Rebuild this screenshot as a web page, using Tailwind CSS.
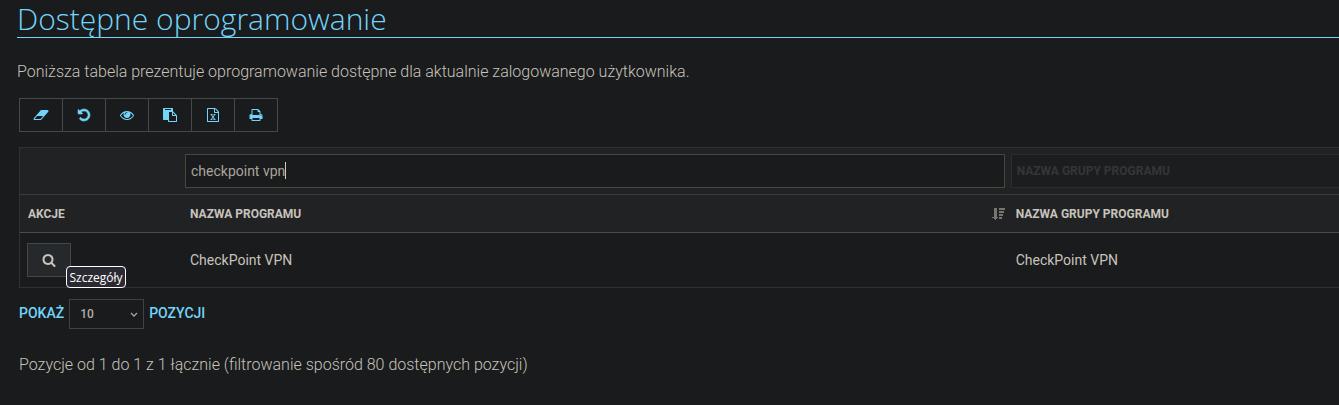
<!DOCTYPE html>
<html lang="pl">
<head>
    <meta charset="UTF-8">
    <meta name="viewport" content="width=device-width, initial-scale=1.0">
    <title>Dostępne oprogramowanie</title>
    <script src="https://cdn.jsdelivr.net/npm/@tailwindcss/browser@4"></script>
</head>
<body class="bg-[#1a1b1d] min-h-screen overflow-x-hidden font-['Roboto',sans-serif] text-sm text-[#c8c3bc]">
    <main class="pl-[17px]">
        <h1 class="h-[38px] border-b border-[#72d5fa] font-['Open_Sans',sans-serif] font-light text-[30px] leading-[37px] text-[#72d5fa]">Dostępne oprogramowanie</h1>
        <p class="mt-[22px] text-base font-light">Poniższa tabela prezentuje oprogramowanie dostępne dla aktualnie zalogowanego użytkownika.</p>

        <div class="pl-0.5">
            <!-- Toolbar -->
            <div class="mt-3.5 inline-flex border border-[#46484a] divide-x divide-[#46484a] text-[#72d5fa] align-top">
                <button type="button" aria-label="Wyczyść" class="flex h-8 w-[43px] items-center justify-center">
                    <svg class="h-3.5 w-4" viewBox="0 0 2048 1792" fill="currentColor"><path d="M960 1408l336-384h-768l-336 384h768zm1013-1077q15 34 9.5 71.5t-30.5 65.5l-896 1024q-38 44-96 44h-768q-38 0-69.5-20.5t-47.5-54.5q-15-34-9.5-71.5t30.5-65.5l896-1024q38-44 96-44h768q38 0 69.5 20.5t47.5 54.5z"/></svg>
                </button>
                <button type="button" aria-label="Przywróć" class="flex h-8 w-[43px] items-center justify-center">
                    <svg class="size-3.5" viewBox="0 0 1792 1792" fill="currentColor" stroke="currentColor" stroke-width="70"><path d="M1664 896q0 156-61 298t-164 245-245 164-298 61q-172 0-327-72.5t-264-204.5q-7-10-6.5-22.5t8.5-20.5l137-138q10-9 25-9 16 2 23 12 73 95 179 147t225 52q104 0 198.5-40.5t163.5-109.5 109.5-163.5 40.5-198.5-40.5-198.5-109.5-163.5-163.5-109.5-198.5-40.5q-98 0-188 35.5t-160 101.5l137 138q31 30 14 69-17 40-59 40h-448q-26 0-45-19t-19-45v-448q0-42 40-59 39-17 69 14l130 129q107-101 244.5-156.5t284.5-55.5q156 0 298 61t245 164 164 245 61 298z"/></svg>
                </button>
                <button type="button" aria-label="Widoczność kolumn" class="flex h-8 w-[43px] items-center justify-center">
                    <svg class="size-3.5" viewBox="0 0 1792 1792" fill="currentColor"><path d="M1664 960q-152-236-381-353 61 104 61 225 0 185-131.5 316.5t-316.5 131.5-316.5-131.5-131.5-316.5q0-121 61-225-229 117-381 353 133 205 333.5 326.5t434.5 121.5 434.5-121.5 333.5-326.5zm-720-384q0-20-14-34t-34-14q-125 0-214.5 89.5t-89.5 214.5q0 20 14 34t34 14 34-14 14-34q0-86 61-147t147-61q20 0 34-14t14-34zm848 384q0 34-20 69-140 230-376.5 368.5t-499.5 138.5-499.5-139-376.5-368q-20-35-20-69t20-69q140-229 376.5-368t499.5-139 499.5 139 376.5 368q20 35 20 69z"/></svg>
                </button>
                <button type="button" aria-label="Kopiuj" class="flex h-8 w-[43px] items-center justify-center">
                    <svg class="size-3.5" viewBox="0 0 1792 1792" fill="currentColor"><path d="M768 1664h896v-640h-416q-40 0-68-28t-28-68v-416h-384v1152zm256-1440v-64q0-13-9.5-22.5t-22.5-9.5h-704q-13 0-22.5 9.5t-9.5 22.5v64q0 13 9.5 22.5t22.5 9.5h704q13 0 22.5-9.5t9.5-22.5zm256 672h299l-299-299v299zm512 128v672q0 40-28 68t-68 28h-960q-40 0-68-28t-28-68v-160h-544q-40 0-68-28t-28-68v-1344q0-40 28-68t68-28h1088q40 0 68 28t28 68v328q21 13 36 28l408 408q28 28 48 76t20 88z"/></svg>
                </button>
                <button type="button" aria-label="Excel" class="flex h-8 w-[43px] items-center justify-center">
                    <svg class="size-3.5" viewBox="0 0 1792 1792" fill="currentColor"><path d="M1596 380q28 28 48 76t20 88v1152q0 40-28 68t-68 28h-1344q-40 0-68-28t-28-68v-1600q0-40 28-68t68-28h896q40 0 88 20t76 48zm-444-244v376h376q-10-29-22-41l-313-313q-12-12-41-22zm384 1528v-1024h-416q-40 0-68-28t-28-68v-416h-768v1536h1280zm-979-234v106h281v-106h-75l103-161q5-7 10-16.5t7.5-13.5 3.5-4h2q1 4 5 10 2 4 4.5 7.5t6 8 6.5 8.5l107 161h-76v106h291v-106h-68l-192-273 195-282h67v-107h-279v107h74l-103 159q-4 7-10 16.5t-9 13.5l-2 3h-2q-1-4-5-10-6-11-17-23l-106-159h76v-107h-290v107h68l189 272-194 283h-68z"/></svg>
                </button>
                <button type="button" aria-label="Drukuj" class="flex h-8 w-[42px] items-center justify-center">
                    <svg class="size-3.5" viewBox="0 0 1792 1792" fill="currentColor"><path d="M448 1536h896v-256h-896v256zm0-640h896v-384h-160q-40 0-68-28t-28-68v-160h-640v640zm1152 64q0-26-19-45t-45-19-45 19-19 45 19 45 45 19 45-19 19-45zm128 0v416q0 13-9.5 22.5t-22.5 9.5h-224v160q0 40-28 68t-68 28h-960q-40 0-68-28t-28-68v-160h-224q-13 0-22.5-9.5t-9.5-22.5v-416q0-79 56.5-135.5t135.5-56.5h64v-544q0-40 28-68t68-28h672q40 0 88 20t76 48l152 152q28 28 48 76t20 88v256h64q79 0 135.5 56.5t56.5 135.5z"/></svg>
                </button>
            </div>

            <table class="mt-[15px] w-full table-fixed border-separate border-spacing-0 border-y border-l border-[#2f3133] text-left">
                <colgroup>
                    <col class="w-[162px]">
                    <col class="w-[62.6%]">
                    <col>
                </colgroup>
                <thead class="bg-[#202224] text-xs font-bold">
                    <tr class="h-[47px]">
                        <td class="border-b border-[#3a3c3e]"></td>
                        <td class="border-b border-[#3a3c3e] px-[3px]">
                            <label class="relative block">
                                <input type="text" value="checkpoint vpn" aria-label="Nazwa programu" class="block h-[34px] w-full border border-[#45483f] bg-[#1a1b1d] px-[5px] text-sm font-normal text-[#aaa59e] outline-none">
                                <!-- text caret -->
                                <span class="absolute left-[100px] top-2 h-[17px] w-px bg-[#d0ccc6]"></span>
                            </label>
                        </td>
                        <td class="border-b border-[#3a3c3e] pl-[3px]">
                            <input type="text" placeholder="NAZWA GRUPY PROGRAMU" aria-label="Nazwa grupy programu" class="block h-[34px] w-full border border-r-0 border-[#2b2d2c] bg-[#1c1d1f] px-[5px] text-xs font-bold placeholder:text-[#343638] outline-none">
                        </td>
                    </tr>
                    <tr class="h-[38px]">
                        <th class="border-b border-[#4a4c4e] px-2">AKCJE</th>
                        <th class="border-b border-[#4a4c4e] pl-2 pr-[3px]">
                            <div class="flex items-center justify-between">
                                NAZWA PROGRAMU
                                <svg class="h-3 w-[13px] text-[#77756f]" viewBox="0 0 13 12" fill="currentColor"><path d="M2 0h3v9h1v1H5v1H4v1H3v-1H2v-1H0V9h2zM7 0h6v2H7zM7 3h5v2H7zM7 6h4v2H7zM7 9h3v2H7z"/></svg>
                            </div>
                        </th>
                        <th class="border-b border-[#4a4c4e] px-2">NAZWA GRUPY PROGRAMU</th>
                    </tr>
                </thead>
                <tbody>
                    <tr class="h-[54px]">
                        <td class="px-[7px]">
                            <div class="relative w-11">
                                <button type="button" aria-label="Szczegóły" class="flex h-[34px] w-11 items-center justify-center border border-[#43484a] bg-[#25292b]">
                                    <svg class="size-3.5" viewBox="0 0 1792 1792" fill="currentColor"><path d="M1216 832q0-185-131.5-316.5t-316.5-131.5-316.5 131.5-131.5 316.5 131.5 316.5 316.5 131.5 316.5-131.5 131.5-316.5zm512 832q0 52-38 90t-90 38q-54 0-90-38l-343-342q-179 124-399 124-143 0-273.5-55.5t-225-150-150-225-55.5-273.5 55.5-273.5 150-225 225-150 273.5-55.5 273.5 55.5 225 150 150 225 55.5 273.5q0 220-124 399l343 343q37 37 37 90z"/></svg>
                                </button>
                                <span role="tooltip" class="absolute left-[39px] top-[23px] flex h-[22px] w-[60px] items-center justify-center rounded-[4px] border border-white bg-[#2b2a33] pt-0.5 font-['Open_Sans',sans-serif] text-xs text-white">Szczegóły</span>
                            </div>
                        </td>
                        <td class="px-2">CheckPoint VPN</td>
                        <td class="px-2">CheckPoint VPN</td>
                    </tr>
                </tbody>
            </table>

            <div class="mt-[11px] flex items-center gap-[5px] font-medium text-[#72d5fa]">
                <label for="pageLength" class="pb-0.5">POKAŻ</label>
                <div class="relative">
                    <select id="pageLength" class="block h-[30px] w-[75px] appearance-none border border-[#404244] bg-[#1a1b1d] px-2.5 text-xs font-medium text-[#b2ada6]">
                        <option>10</option>
                        <option>25</option>
                        <option>50</option>
                    </select>
                    <svg class="pointer-events-none absolute right-1.5 top-3 size-2 text-[#a8a39c]" viewBox="0 0 8 8" fill="none" stroke="currentColor" stroke-width="1.3"><path d="M1 2l3 3 3-3"/></svg>
                </div>
                <span class="pb-0.5">POZYCJI</span>
            </div>

            <p class="mt-6 text-base font-light">Pozycje od 1 do 1 z 1 łącznie (filtrowanie spośród 80 dostępnych pozycji)</p>
        </div>
    </main>
</body>
</html>
